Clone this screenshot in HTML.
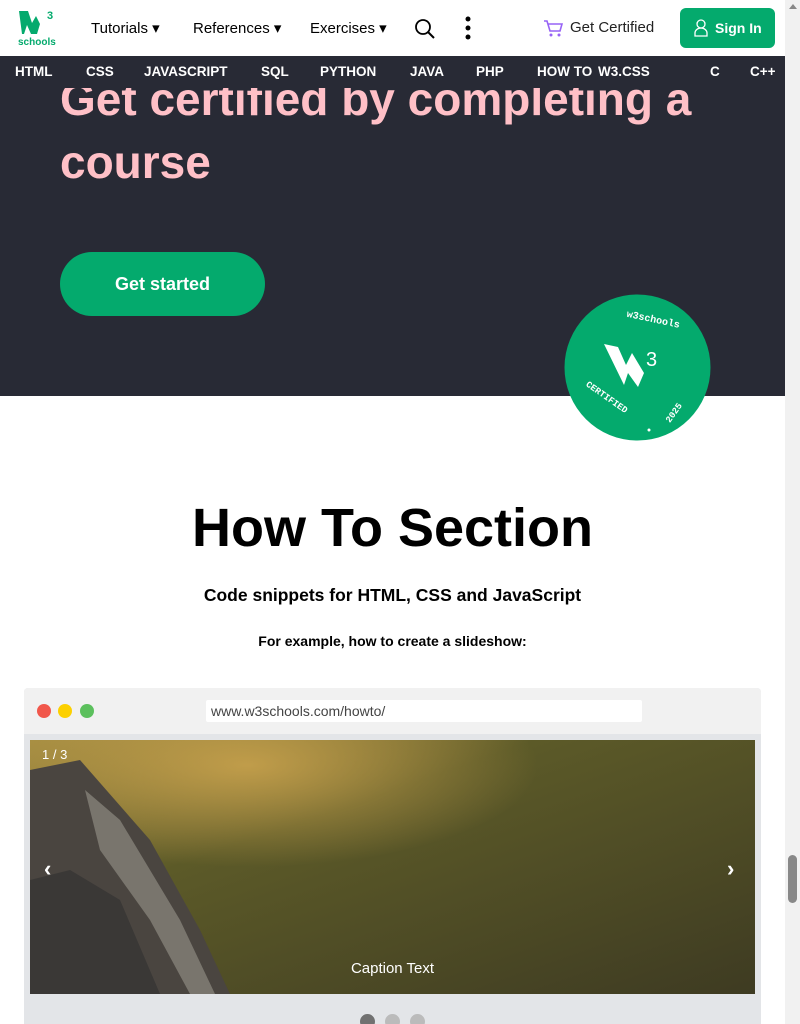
<!DOCTYPE html>
<html><head><meta charset="utf-8"><style>
*{margin:0;padding:0;box-sizing:border-box}
body{width:800px;height:1024px;overflow:hidden;position:relative;background:#fff;font-family:"Liberation Sans",sans-serif}
.top{position:absolute;left:0;top:0;width:785px;height:56px;background:#fff}
.nav{position:absolute;top:56px;left:0;width:785px;height:32px;background:#282a35;color:#fff;font-size:13.5px;font-weight:bold}
.nav span{position:absolute;top:8px}
.hero{position:absolute;top:88px;left:0;width:785px;height:308px;background:#282a35;overflow:hidden}
.hero h1{position:absolute;left:60px;color:#ffc0c7;font-size:46px;font-weight:bold;line-height:72px;white-space:nowrap}
.btn{position:absolute;left:60px;top:252px;width:205px;height:64px;border-radius:32px;background:#04aa6d;color:#fff;font-weight:bold;font-size:18px;text-align:center;line-height:64px}
.t{position:absolute;font-size:15px;color:#000}
.sb{position:absolute;left:785px;top:0;width:15px;height:1024px;background:#f1f1f1}
</style></head><body>
<div class="top">
 <div style="position:absolute;left:18px;top:8px;width:40px;height:40px">
  <svg width="40" height="40" viewBox="0 0 40 40"><path d="M1 3h9l4 12 4-7 4 8-3 10h-6l-4-9-3 9H4z" fill="#04aa6d"/><text x="29" y="11" font-size="11" fill="#04aa6d" font-family="Liberation Sans" font-weight="bold">3</text><text x="0" y="37" font-size="10" fill="#04aa6d" font-family="Liberation Sans" font-weight="bold">schools</text></svg>
 </div>
 <span class="t" style="left:91px;top:19px">Tutorials ▾</span>
 <span class="t" style="left:193px;top:19px">References ▾</span>
 <span class="t" style="left:310px;top:19px">Exercises ▾</span>
 <svg style="position:absolute;left:414px;top:18px" width="22" height="22"><circle cx="9" cy="9" r="7" fill="none" stroke="#000" stroke-width="1.8"/><path d="M14 14l6 6" stroke="#000" stroke-width="2"/></svg>
 <svg style="position:absolute;left:464px;top:16px" width="8" height="24"><circle cx="4" cy="3" r="2.5"/><circle cx="4" cy="12" r="2.5"/><circle cx="4" cy="21" r="2.5"/></svg>
 <svg style="position:absolute;left:543px;top:19px" width="20" height="18"><path d="M1 2h3l3 10h10l2-7H5" fill="none" stroke="#9763f6" stroke-width="1.6"/><circle cx="8" cy="16" r="1.5" fill="#9763f6"/><circle cx="16" cy="16" r="1.5" fill="#9763f6"/></svg>
 <span class="t" style="left:570px;top:19px;color:#222">Get Certified</span>
 <div style="position:absolute;left:680px;top:8px;width:95px;height:40px;background:#04aa6d;border-radius:6px;color:#fff;font-size:14px;font-weight:bold;line-height:40px;padding-left:35px">Sign In
  <svg style="position:absolute;left:14px;top:11px" width="14" height="18"><circle cx="7" cy="5" r="4" fill="none" stroke="#fff" stroke-width="1.3"/><path d="M1 17v-3a6 5 0 0 1 12 0v3z" fill="none" stroke="#fff" stroke-width="1.3"/></svg></div>
</div>
<div class="hero">
 <h1 style="top:-25px">Get certified by completing a</h1>
 <h1 style="top:38px">course</h1>
 <div class="btn" style="top:164px">Get started</div>
</div>
<div class="nav">
 <span style="left:15px">HTML</span><span style="left:86px">CSS</span><span style="left:144px">JAVASCRIPT</span><span style="left:261px">SQL</span><span style="left:320px">PYTHON</span><span style="left:410px">JAVA</span><span style="left:476px">PHP</span><span style="left:537px">HOW TO</span><span style="left:598px">W3.CSS</span><span style="left:710px">C</span><span style="left:750px">C++</span>
</div>
<svg style="position:absolute;left:564px;top:294px" width="147" height="147" viewBox="0 0 147 147">
 <circle cx="73.5" cy="73.5" r="73" fill="#04aa6d"/>
 <path d="M40 50l14 3 8 18 6-12 12 20 -6 14-10-14-4 12z" fill="#fff"/>
 <text x="82" y="72" fill="#fff" font-size="20" font-family="Liberation Sans">3</text>
 <text x="52" y="26" fill="#fff" font-size="10" font-weight="bold" font-family="Liberation Mono" transform="rotate(12 73 73)">w3schools</text>
 <text x="18" y="98" fill="#fff" font-size="9" font-weight="bold" font-family="Liberation Mono" transform="rotate(35 30 100)">CERTIFIED</text>
 <text x="98" y="126" fill="#fff" font-size="9" font-weight="bold" font-family="Liberation Mono" transform="rotate(-55 105 120)">2025</text>
 <circle cx="85" cy="136" r="1.5" fill="#fff"/>
</svg>
<div style="position:absolute;top:497px;width:785px;text-align:center;font-size:54px;font-weight:bold">How To Section</div>
<div style="position:absolute;top:585px;width:785px;text-align:center;font-size:17.5px;font-weight:bold">Code snippets for HTML, CSS and JavaScript</div>
<div style="position:absolute;top:633px;width:785px;text-align:center;font-size:14px;font-weight:bold">For example, how to create a slideshow:</div>
<div style="position:absolute;left:24px;top:688px;width:737px;height:336px;background:#e3e5e8;border-radius:4px 4px 0 0;overflow:hidden">
 <div style="height:46px;background:#f1f1f1"></div>
 <span style="position:absolute;left:13px;top:16px;width:14px;height:14px;border-radius:50%;background:#f1574b"></span>
 <span style="position:absolute;left:34px;top:16px;width:14px;height:14px;border-radius:50%;background:#fcd000"></span>
 <span style="position:absolute;left:56px;top:16px;width:14px;height:14px;border-radius:50%;background:#5cc05d"></span>
 <div style="position:absolute;left:182px;top:12px;width:436px;height:22px;background:#fff;border-radius:2px;font-size:14px;color:#444;padding:3px 5px">www.w3schools.com/howto/</div>
 <svg style="position:absolute;left:6px;top:52px" width="725" height="254" viewBox="0 0 725 254">
  <defs><linearGradient id="g" x1="0" y1="0" x2="1" y2="1"><stop offset="0" stop-color="#a08a40"/><stop offset=".35" stop-color="#5c5a28"/><stop offset="1" stop-color="#3e3b22"/></linearGradient>
  <radialGradient id="h" cx=".3" cy=".1" r=".4"><stop offset="0" stop-color="#d2a850" stop-opacity=".8"/><stop offset="1" stop-color="#d2a850" stop-opacity="0"/></radialGradient></defs>
  <rect width="725" height="254" fill="url(#g)"/>
  <rect width="725" height="254" fill="url(#h)"/>
  <path d="M0 30 L50 20 L120 100 L170 190 L200 254 L0 254Z" fill="#4a4540"/>
  <path d="M55 50 L90 80 L150 180 L185 254 L160 254 L120 180 L70 110Z" fill="#8d8a80" opacity=".7"/>
  <path d="M0 140 L40 130 L90 160 L130 254 L0 254Z" fill="#3a3836"/>
 </svg>
 <span style="position:absolute;left:18px;top:59px;color:#fff;font-size:13px">1 / 3</span>
 <span style="position:absolute;left:20px;top:168px;color:#fff;font-size:22px;font-weight:bold">‹</span>
 <span style="position:absolute;left:703px;top:168px;color:#fff;font-size:22px;font-weight:bold">›</span>
 <span style="position:absolute;left:0;width:737px;text-align:center;top:272px;color:#fff;font-size:15px">Caption Text</span>
 <span style="position:absolute;left:336px;top:326px;width:15px;height:15px;border-radius:50%;background:#717171"></span>
 <span style="position:absolute;left:361px;top:326px;width:15px;height:15px;border-radius:50%;background:#bbb"></span>
 <span style="position:absolute;left:386px;top:326px;width:15px;height:15px;border-radius:50%;background:#bbb"></span>
</div>
<div class="sb"><div style="position:absolute;left:3px;top:855px;width:9px;height:48px;background:#888;border-radius:5px"></div><div style="position:absolute;left:4px;top:4px;border:4px solid transparent;border-bottom:5px solid #888;border-top:0"></div></div>
</body></html>
